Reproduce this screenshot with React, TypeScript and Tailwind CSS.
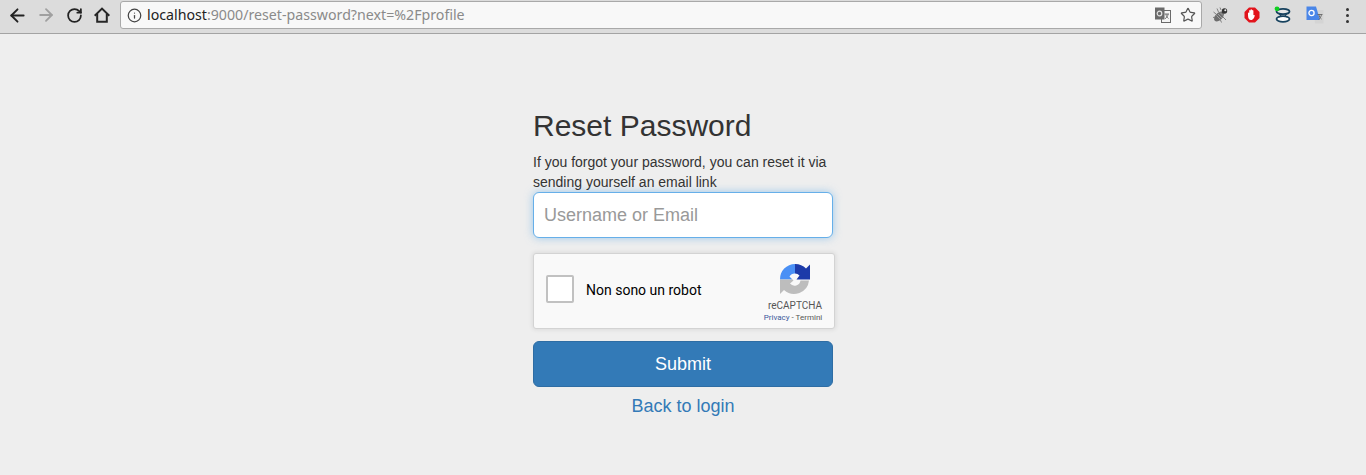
import { ArrowLeft, ArrowRight, Info, RotateCw, Star } from 'lucide-react'

function HomeIcon() {
  return (
    <svg width="16" height="16" viewBox="0 0 16 16" fill="none" stroke="#262626" strokeWidth="2">
      <path d="M0.700 8.800 8 1.600l7.300 7.200" />
      <path d="M3.200 7v7.800h9.600V7" />
    </svg>
  )
}

function TranslateIcon() {
  return (
    <svg width="16" height="16" viewBox="0 0 16 16">
      <rect x="0" y="0.500" width="9.500" height="12" fill="#6a6a6a" />
      <rect x="6.500" y="3.500" width="9" height="12" fill="#f4f4f4" stroke="#6a6a6a" />
      <rect x="6" y="3" width="3.500" height="9.500" fill="#6a6a6a" />
      <circle cx="4.500" cy="6.500" r="2.300" fill="none" stroke="#e4e4e4" strokeWidth="1.200" />
      <path d="M9.500 7h4.500M11 7c0 2 1.300 3.700 2.500 4.500M13 7c0 2-1.500 3.700-3 4.800" fill="none" stroke="#666" strokeWidth="0.900" />
    </svg>
  )
}

function BugIcon() {
  return (
    <svg width="18" height="18" viewBox="0 0 18 18">
      <path d="M4 8 1.500 6M6.500 6 5 2.500M9 4 8 1.500M8 13l1.500 3.500M11 11l3 3M4 11l-3 .5" stroke="#777" strokeWidth="0.900" />
      <ellipse cx="7" cy="10.500" rx="6" ry="3.600" transform="rotate(-45 7 10.500)" fill="#6e6e6e" />
      <path d="M4.500 9.500l4 4M6 8l4 4M8 6.500l3 3" stroke="#b8b8b8" strokeWidth="0.700" />
      <circle cx="12.500" cy="5" r="2.700" fill="#333" />
      <circle cx="13.300" cy="4.300" r="1" fill="#eee" />
    </svg>
  )
}

function OperaIcon() {
  return (
    <svg width="16" height="16" viewBox="0 0 16 16">
      <path d="M5 .5h6L15.500 5v6L11 15.500H5L.5 11V5Z" fill="#e2141c" />
      <path d="M4 8.200V6c0-.8 1-.8 1.200 0V3.700c0-.9 1.200-.9 1.300 0V2.900c0-.9 1.400-.9 1.500 0v.7c.1-.8 1.300-.8 1.400.1v4.600c.3-.6 1.500-.5 1.400.3-.3 1-.7 3.700-3 4.400H7c-2 0-3-1.700-3-4.800Z" fill="#fff" />
    </svg>
  )
}

function HourglassIcon() {
  return (
    <svg width="18" height="18" viewBox="0 0 18 18">
      <ellipse cx="9" cy="5.500" rx="6.500" ry="2.700" fill="#e6e6e6" stroke="#17425e" strokeWidth="1.800" />
      <ellipse cx="9" cy="13" rx="6.500" ry="2.900" fill="#fdfdfd" stroke="#17425e" strokeWidth="1.800" />
      <path d="M5 8c2.500 1 2.500 1.500 0 3M13 8c-2.500 1-2.500 1.500 0 3" fill="none" stroke="#17425e" strokeWidth="1.200" />
      <circle cx="3" cy="2.800" r="2.400" fill="#10d020" />
    </svg>
  )
}

function GoogleTranslateIcon() {
  return (
    <svg width="18" height="18" viewBox="0 0 18 18">
      <path d="M8 4h9.500v13.500H9Z" fill="#d4d4d4" />
      <path d="M0.500 0.500H10L14 14H0.500Z" fill="#4a86e8" />
      <circle cx="5.500" cy="7" r="2.600" fill="none" stroke="#fff" strokeWidth="1.300" />
      <path d="M11.500 8.500h5M13 8.500c.2 2 1 3.500 2.500 4.500M15.500 8.500c-.3 2-1.500 4-3 5" fill="none" stroke="#666" strokeWidth="0.900" />
    </svg>
  )
}

function RecaptchaLogo() {
  return (
    <svg width="32" height="33" viewBox="0 0 32 33">
      <path d="M16 1A15 15 0 0 0 1 16.500H13.500L10.500 13.500A6 6 0 0 1 16 10.500Z" fill="#4a90f5" />
      <path d="M16 1A15 15 0 0 1 27 5.500L31 1.500V16.500H17.500L20.500 12.500A6 6 0 0 0 16 10.500Z" fill="#1c3aa9" />
      <path d="M1 16.500V31L5 27A15 15 0 0 0 30 17.500H21.500A6 6 0 0 1 11 20.500L14.500 17.500 13.500 16.500Z" fill="#bdbdbd" />
    </svg>
  )
}

export default function App() {
  return (
    <div className="min-h-[475px] bg-[#eeeeee] font-['Liberation_Sans',Arial,sans-serif]">
      {/* browser toolbar */}
      <div className="flex h-[34px] items-center border-b border-[#a3a3a3] bg-[#dcdcdc] pb-[3px]">
        <div className="flex w-[120px] shrink-0 items-center gap-[8px] pl-[7px]">
          <ArrowLeft size={21} strokeWidth={2.200} color="#222222" />
          <ArrowRight size={20} strokeWidth={2.200} color="#a0a0a0" />
          <RotateCw size={17} strokeWidth={2.500} color="#222222" className="ml-[2px]" />
          <div className="ml-[3px]">
            <HomeIcon />
          </div>
        </div>
        <div className="flex h-[28px] w-[1082px] shrink-0 items-center rounded-[3px] border border-[#a9a9a9] bg-[#f8f8f8] pl-[6px] pr-[5px]">
          <Info size={15} color="#444444" />
          <span className="ml-[5px] whitespace-nowrap font-['Noto_Sans',sans-serif] text-[14.2px] text-[#8a8a8a]">
            <span className="text-[#222222]">localhost</span>:9000/reset-password?next=%2Fprofile
          </span>
          <div className="ml-auto flex items-center gap-[9px]">
            <TranslateIcon />
            <Star size={16} strokeWidth={1.800} color="#555555" />
          </div>
        </div>
        <div className="ml-[10px] flex items-center gap-[14px]">
          <BugIcon />
          <OperaIcon />
          <HourglassIcon />
          <GoogleTranslateIcon />
        </div>
        <div className="ml-[22px] flex flex-col gap-[3px]">
          <span className="h-[3px] w-[3px] rounded-full bg-[#333333]" />
          <span className="h-[3px] w-[3px] rounded-full bg-[#333333]" />
          <span className="h-[3px] w-[3px] rounded-full bg-[#333333]" />
        </div>
      </div>

      {/* reset form */}
      <div className="mx-auto w-[300px] pt-[70px]">
        <h2 className="text-[30px] leading-[43px] text-[#333333]">Reset Password</h2>
        <p className="mt-[5px] text-[14px] leading-[20px] text-[#333333]">
          If you forgot your password, you can reset it via sending yourself an email link
        </p>
        <input
          placeholder="Username or Email"
          className="block h-[46px] w-full rounded-[6px] border border-[#66afe9] bg-white px-[10px] text-[18px] text-[#555555] shadow-[0_0_8px_rgba(102,175,233,0.6)] outline-none placeholder:text-[#999999]"
        />

        <div className="mt-[15px] flex h-[76px] w-[302px] items-center rounded-[3px] border border-[#d3d3d3] bg-[#f9f9f9] shadow-[0_0_4px_1px_rgba(0,0,0,0.08)] font-['Roboto',sans-serif]">
          <div className="mb-[4px] ml-[12px] h-[28px] w-[28px] rounded-[2px] border-2 border-[#c1c1c1] bg-white" />
          <span className="mb-[2px] ml-[12px] text-[14px] text-black">Non sono un robot</span>
          <div className="ml-auto mr-[9px] flex w-[60px] flex-col items-center pt-[4px]">
            <RecaptchaLogo />
            <span className="mt-[3px] text-[10px] leading-[14px] text-[#555555]">reCAPTCHA</span>
            <span className="mr-[4px] whitespace-nowrap text-[8px] leading-[10px] text-[#555555]">
              <span className="text-[#3b5a9b]">Privacy</span> - Termini
            </span>
          </div>
        </div>

        <button className="mt-[12px] block h-[46px] w-full rounded-[6px] border border-[#2e6da4] bg-[#337ab7] text-[18px] text-white">
          Submit
        </button>
        <a href="#" className="mt-[6px] block text-center text-[18px] leading-[26px] text-[#337ab7]">
          Back to login
        </a>
      </div>
    </div>
  )
}
